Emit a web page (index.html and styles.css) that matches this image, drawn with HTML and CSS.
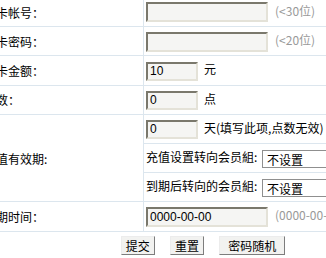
FILE: index.html
```html
<!DOCTYPE html>
<html lang="zh-CN">
<head>
    <meta charset="UTF-8">
    <title>添加点卡</title>
    <link rel="stylesheet" href="styles.css">
</head>
<body>
    <form class="card-form">
        <table class="form-table">
            <tr>
                <td class="label">点卡帐号：</td>
                <td class="field"><input type="text" class="txt txt-long"><span class="hint">(&lt;30位)</span></td>
            </tr>
            <tr>
                <td class="label">点卡密码：</td>
                <td class="field"><input type="text" class="txt txt-long"><span class="hint">(&lt;20位)</span></td>
            </tr>
            <tr>
                <td class="label">点卡金额：</td>
                <td class="field"><input type="text" class="txt txt-short" value="10"><span class="unit">元</span></td>
            </tr>
            <tr>
                <td class="label">点数：</td>
                <td class="field"><input type="text" class="txt txt-short" value="0"><span class="unit">点</span></td>
            </tr>
            <tr>
                <td class="label" rowspan="3">充值有效期:</td>
                <td class="field"><input type="text" class="txt txt-short" value="0"><span class="unit">天(填写此项,点数无效)</span></td>
            </tr>
            <tr>
                <td class="field">充值设置转向会员組:
                    <select class="sel"><option>不设置</option></select>
                </td>
            </tr>
            <tr>
                <td class="field">到期后转向的会员組:
                    <select class="sel"><option>不设置</option></select>
                </td>
            </tr>
            <tr>
                <td class="label">过期时间：</td>
                <td class="field"><input type="text" class="txt txt-long" value="0000-00-00"><span class="hint">(0000-00-00)</span></td>
            </tr>
            <tr>
                <td class="actions" colspan="2">
                    <input type="submit" class="btn" value="提交">
                    <input type="reset" class="btn" value="重置">
                    <input type="button" class="btn btn-wide" value="密码随机">
                </td>
            </tr>
        </table>
    </form>
</body>
</html>
```

FILE: styles.css
```css
body {
    margin: 0;
    font-family: Tahoma, "Liberation Sans", "Noto Sans CJK SC", sans-serif;
    font-size: 12px;
    color: #000;
    background-color: #fff;
    overflow: hidden;
}
.card-form {
    margin: -2px 0 0 -20px;
}
.form-table {
    width: 446px;
    border-collapse: collapse;
}
.form-table td {
    height: 28.2px;
    padding: 0;
    border-bottom: 1px solid #dce6ee;
    vertical-align: middle;
    white-space: nowrap;
}
.label {
    width: 159px;
    padding-left: 4px !important;
    border-right: 1px solid #dce6ee;
    font-family: "Noto Sans CJK SC", sans-serif;
}
.field {
    padding-left: 2px !important;
    font-family: "Noto Sans CJK SC", sans-serif;
}
.txt {
    box-sizing: border-box;
    height: 20px;
    margin: 0;
    padding: 0 2px;
    border: 2px solid;
    border-color: #7a786c #e4e2d8 #e4e2d8 #7a786c;
    background-color: #f5f5f3;
    font-family: Tahoma, "Liberation Sans", sans-serif;
    font-size: 12px;
    vertical-align: middle;
}
.txt-long {
    width: 122px;
}
.txt-short {
    width: 52px;
    height: 19px;
}
.hint {
    margin-left: 7px;
    color: #999;
}
.unit {
    margin-left: 6px;
}
.sel {
    appearance: none;
    box-sizing: border-box;
    width: 90px;
    height: 18px;
    margin-left: 2px;
    padding: 0 4px;
    border: 1px solid #8f8f8f;
    background-color: #fff;
    font-family: "Noto Sans CJK SC", sans-serif;
    font-size: 12px;
    vertical-align: middle;
}
.form-table .actions {
    border-bottom: none;
    text-align: center;
}
.btn {
    box-sizing: border-box;
    height: 19px;
    margin: 0 6px;
    padding: 0 4px;
    border: 1px solid;
    border-color: #ececec #7d7d7d #7d7d7d #ececec;
    background-color: #f2f2f0;
    font-family: "Noto Sans CJK SC", sans-serif;
    font-size: 12px;
    line-height: 15px;
    color: #000;
}
.btn-wide {
    padding: 0 8px;
}
```
